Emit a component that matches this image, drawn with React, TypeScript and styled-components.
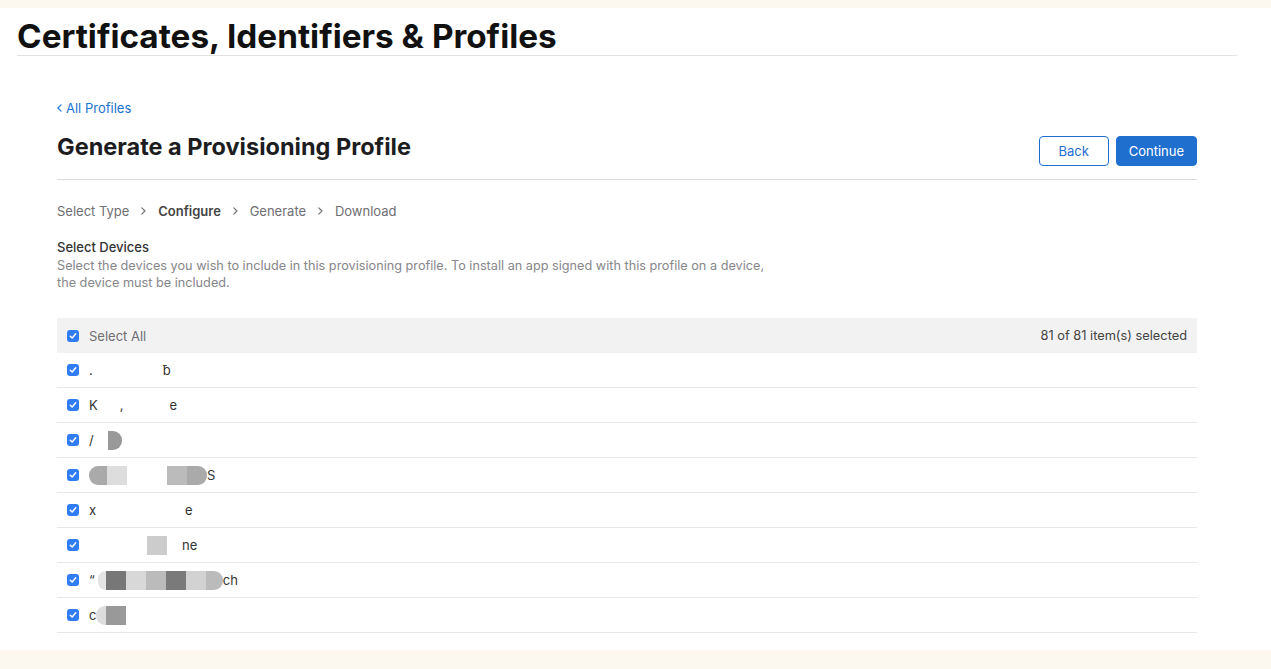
import React from 'react';
import styled, { createGlobalStyle } from 'styled-components';

const GlobalStyle = createGlobalStyle`
  html, body {
    margin: 0;
    padding: 0;
    background: #fcf8f0;
  }
  body {
    font-family: Inter, "Liberation Sans", Arial, sans-serif;
    color: #1d1d1f;
    -webkit-font-smoothing: antialiased;
  }
`;

const Page = styled.div`
  margin-top: 8px;
  height: 642px;
  background: #fff;
  overflow: hidden;
`;

const Header = styled.header`
  margin-left: 17px;
  width: 1220px;
  border-bottom: 1px solid #e2e2e2;
  padding-top: 9px;
  height: 38px;
`;

const Title = styled.h1`
  margin: 0;
  font-size: 33.3px;
  line-height: 38px;
  font-weight: 700;
  color: #111;
`;

const Content = styled.main`
  margin-left: 57px;
  width: 1140px;
  padding-top: 40px;
`;

const BackLink = styled.a`
  display: inline-flex;
  align-items: center;
  gap: 4px;
  font-size: 13px;
  line-height: 16px;
  color: #1a73d0;
  text-decoration: none;
`;

const TopBar = styled.div`
  display: flex;
  align-items: flex-start;
  justify-content: space-between;
  padding: 20px 0 13px;
  border-bottom: 1px solid #dcdcdc;
`;

const PageTitle = styled.h2`
  margin: -4px 0 0;
  font-size: 23.5px;
  line-height: 30px;
  font-weight: 700;
  color: #1d1d1f;
`;

const Actions = styled.div`
  display: flex;
  gap: 7px;
`;

const Button = styled.button<{ $primary?: boolean }>`
  height: 30px;
  min-width: ${p => (p.$primary ? '80px' : '70px')};
  padding: 0 12px;
  border-radius: 4px;
  font-family: inherit;
  font-size: 13px;
  cursor: pointer;
  border: 1px solid #1f6fcf;
  background: ${p => (p.$primary ? '#1f6fcf' : '#fff')};
  color: ${p => (p.$primary ? '#fff' : '#1f6fcf')};
`;

const Steps = styled.ol`
  display: flex;
  align-items: center;
  list-style: none;
  margin: 0;
  padding: 23px 0 0;
  font-size: 13px;
  line-height: 16px;
  color: #6e6e73;
`;

const Step = styled.li<{ $active?: boolean }>`
  font-weight: ${p => (p.$active ? 600 : 400)};
  color: ${p => (p.$active ? '#444' : '#6e6e73')};
`;

const Chevron = styled.li`
  display: flex;
  align-items: center;
  padding: 0 12px 0 12px;
`;

const Section = styled.section`
  padding-top: 20px;
`;

const SectionTitle = styled.h3`
  margin: 0;
  font-size: 13px;
  line-height: 16px;
  font-weight: 500;
  color: #333;
`;

const SectionText = styled.p`
  margin: 2px 0 0;
  width: 720px;
  font-size: 12.7px;
  line-height: 17px;
  color: #86868b;
`;

const Table = styled.div`
  margin-top: 27px;
`;

const HeadRow = styled.div`
  display: flex;
  align-items: center;
  justify-content: space-between;
  height: 35px;
  padding: 0 10px;
  background: #f2f2f2;
  font-size: 13px;
  color: #6e6e73;
`;

const Count = styled.span`
  color: #444;
  font-size: 12.8px;
`;

const Row = styled.div`
  display: flex;
  align-items: center;
  height: 34px;
  padding: 0 10px;
  border-bottom: 1px solid #e8e8e8;
  font-size: 13px;
  color: #333;
`;

const Label = styled.label`
  display: flex;
  align-items: center;
  gap: 10px;
`;

const Box = styled.span`
  width: 12px;
  height: 12px;
  border-radius: 3px;
  background: #2f7cf6;
  display: inline-flex;
  align-items: center;
  justify-content: center;
  flex: none;
`;

const Name = styled.span`
  display: flex;
  align-items: center;
  height: 20px;
`;

const Gap = styled.span<{ $w: number }>`
  display: inline-block;
  width: ${p => p.$w}px;
`;

const Mask = styled.span<{ $w: number; $c: string; $round?: 'l' | 'r' | 'lr' }>`
  display: inline-block;
  width: ${p => p.$w}px;
  height: 19px;
  background: ${p => p.$c};
  border-radius: ${p =>
    p.$round === 'l' ? '9px 0 0 9px' : p.$round === 'r' ? '0 9px 9px 0' : p.$round === 'lr' ? '9px' : '0'};
`;

type Seg =
  | { t: string }
  | { g: number }
  | { m: number; c: string; r?: 'l' | 'r' | 'lr' };

const devices: Seg[][] = [
  [{ t: '.' }, { g: 70 }, { t: 'ƀ' }],
  [{ t: 'K' }, { g: 22 }, { t: ',' }, { g: 46 }, { t: 'e' }],
  [{ t: '/' }, { g: 14 }, { m: 14, c: '#999', r: 'r' }],
  [
    { m: 18, c: '#aaa', r: 'l' },
    { m: 20, c: '#ddd' },
    { g: 40 },
    { m: 20, c: '#bbb' },
    { m: 20, c: '#aaa', r: 'r' },
    { t: 'S' },
  ],
  [{ t: 'x' }, { g: 89 }, { t: 'e' }],
  [{ g: 58 }, { m: 20, c: '#ccc' }, { g: 15 }, { t: 'ne' }],
  [
    { t: '“' },
    { g: 3 },
    { m: 8, c: '#e4e4e4', r: 'l' },
    { m: 20, c: '#777' },
    { m: 20, c: '#d8d8d8' },
    { m: 20, c: '#bbb' },
    { m: 20, c: '#7a7a7a' },
    { m: 20, c: '#d2d2d2' },
    { m: 17, c: '#bbb', r: 'r' },
    { t: 'ch' },
  ],
  [{ t: 'c' }, { m: 10, c: '#ddd', r: 'l' }, { m: 20, c: '#999' }],
];

const Check = () => (
  <Box>
    <svg width="8" height="8" viewBox="0 0 8 8">
      <path d="M1.3 4.2 L3.2 6 L6.7 1.8" fill="none" stroke="#fff" strokeWidth="1.5" strokeLinecap="round" strokeLinejoin="round" />
    </svg>
  </Box>
);

const ChevronIcon = ({ size = 8 }: { size?: number }) => (
  <svg width={size * 0.6} height={size} viewBox="0 0 6 10">
    <path d="M1 1 L5 5 L1 9" fill="none" stroke="currentColor" strokeWidth="1.4" strokeLinecap="round" strokeLinejoin="round" />
  </svg>
);

const BackChevron = () => (
  <svg width="5" height="8" viewBox="0 0 6 10">
    <path d="M5 1 L1 5 L5 9" fill="none" stroke="currentColor" strokeWidth="1.4" strokeLinecap="round" strokeLinejoin="round" />
  </svg>
);

const steps = ['Select Type', 'Configure', 'Generate', 'Download'];

const App = () => (
  <>
    <GlobalStyle />
    <Page>
      <Header>
        <Title>Certificates, Identifiers &amp; Profiles</Title>
      </Header>
      <Content>
        <BackLink href="#">
          <BackChevron />
          All Profiles
        </BackLink>
        <TopBar>
          <PageTitle>Generate a Provisioning Profile</PageTitle>
          <Actions>
            <Button>Back</Button>
            <Button $primary>Continue</Button>
          </Actions>
        </TopBar>
        <Steps>
          {steps.map((s, i) => (
            <React.Fragment key={s}>
              {i > 0 && (
                <Chevron>
                  <ChevronIcon />
                </Chevron>
              )}
              <Step $active={s === 'Configure'}>{s}</Step>
            </React.Fragment>
          ))}
        </Steps>
        <Section>
          <SectionTitle>Select Devices</SectionTitle>
          <SectionText>
            Select the devices you wish to include in this provisioning profile. To install an app signed with this profile on a device,
            the device must be included.
          </SectionText>
        </Section>
        <Table>
          <HeadRow>
            <Label>
              <Check />
              Select All
            </Label>
            <Count>81 of 81 item(s) selected</Count>
          </HeadRow>
          {devices.map((segs, i) => (
            <Row key={i}>
              <Label>
                <Check />
                <Name>
                  {segs.map((s, j) =>
                    't' in s ? (
                      <span key={j}>{s.t}</span>
                    ) : 'g' in s ? (
                      <Gap key={j} $w={s.g} />
                    ) : (
                      <Mask key={j} $w={s.m} $c={s.c} $round={s.r} />
                    )
                  )}
                </Name>
              </Label>
            </Row>
          ))}
        </Table>
      </Content>
    </Page>
  </>
);

export default App;
